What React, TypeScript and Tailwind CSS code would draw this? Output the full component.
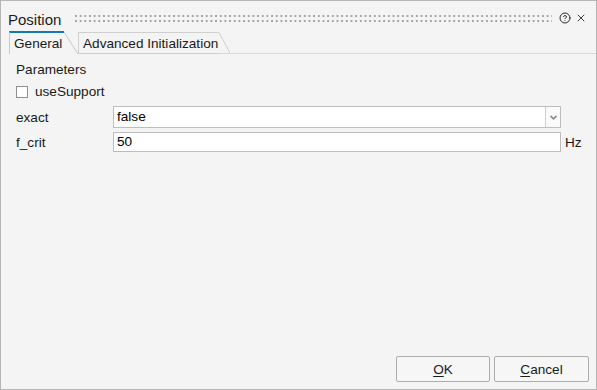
import { CircleHelp, X } from "lucide-react";

function Tab({ label, active, width, slant }: { label: string; active?: boolean; width: number; slant: number }) {
  const h = active ? 23 : 22;
  return (
    <div className="flex items-stretch" style={{ height: h }}>
      <div
        className={
          active
            ? "border-l border-t-2 border-l-[#c9c9c9] border-t-[#1479b8] pl-[4px] pt-[3px] pb-[3px] leading-[15px] whitespace-nowrap"
            : "border-l border-t border-b border-[#cfcfcf] pl-[4px] pt-[3px] pb-[2px] leading-[15px] whitespace-nowrap"
        }
        style={{ width }}
      >
        {label}
      </div>
      <svg width={slant} height={h} className="block">
        {active ? (
          <line x1="0" y1="1" x2={slant} y2={h} stroke="#c9c9c9" strokeWidth="1" />
        ) : (
          <>
            <line x1="0" y1="0.5" x2={slant} y2={h - 1} stroke="#cfcfcf" strokeWidth="1" />
            <line x1="0" y1={h - 0.5} x2={slant} y2={h - 0.5} stroke="#d8d8d8" strokeWidth="1" />
          </>
        )}
      </svg>
    </div>
  );
}

// drag grip dots in the title bar
function Grip() {
  return (
    <svg width="477" height="8" className="block" shapeRendering="crispEdges">
      <defs>
        <pattern id="grip" width="4.67" height="5" patternUnits="userSpaceOnUse">
          <rect x="0" y="0" width="2" height="2" fill="#a3a3a3" />
        </pattern>
      </defs>
      <rect x="0" y="0" width="477" height="8" fill="url(#grip)" />
    </svg>
  );
}

export default function App() {
  return (
    <div
      className="w-[597px] h-[390px] bg-[#f4f4f4] border border-[#b5b5b5] flex flex-col text-[13.6px] text-[#1a1a1a] overflow-hidden"
      style={{ fontFamily: '"Liberation Sans", Arial, sans-serif' }}
    >
      {/* title bar */}
      <div className="flex items-start h-[30px] pt-[11px] pl-[7px]">
        <span className="text-[15px] leading-[15px] text-[#1c1c1c]">Position</span>
        <div className="ml-[14px] mt-[3px]">
          <Grip />
        </div>
        <div className="ml-[7px] flex items-center gap-[4px] text-[#2a2a2a]">
          <CircleHelp size={12} strokeWidth={2} />
          <X size={12} strokeWidth={1.8} />
        </div>
      </div>

      {/* tabs */}
      <div className="flex items-end h-[23px]">
        <div className="w-[8px]" />
        <Tab label="General" active width={55} slant={14} />
        <Tab label="Advanced Initialization" width={141} slant={11} />
        <div className="flex-1 h-[1px] bg-[#dadada]" />
      </div>

      {/* content */}
      <div className="flex-1 pl-[15px] pt-[8px]">
        <div className="leading-[15px]">Parameters</div>
        <div className="mt-[7px] h-[15px] flex items-center">
          <div className="w-[12px] h-[12px] border border-[#8f8f8f] bg-white" />
          <span className="ml-[7px] leading-[15px]">useSupport</span>
        </div>

        <div className="mt-[7px] flex items-center h-[22px]">
          <span className="w-[97px] leading-[15px]">exact</span>
          <div className="w-[448px] h-[22px] border border-[#bdbdbd] bg-white flex items-stretch">
            <span className="flex-1 pl-[3px] leading-[20px] text-black">false</span>
            <div className="w-[15px] border-l border-[#cdcdcd] bg-[#fafafa] flex items-center justify-center">
              <svg width="7" height="5" viewBox="0 0 7 5">
                <path d="M0.5 0.8 L3.5 3.8 L6.5 0.8" fill="none" stroke="#8a8a8a" strokeWidth="1.6" />
              </svg>
            </div>
          </div>
        </div>

        <div className="mt-[4px] flex items-center h-[20px]">
          <span className="w-[97px] leading-[15px]">f_crit</span>
          <div className="w-[448px] h-[20px] border border-[#bdbdbd] bg-white pl-[3px] leading-[18px] text-black">50</div>
          <span className="ml-[4px] leading-[15px]">Hz</span>
        </div>
      </div>

      {/* footer */}
      <div className="flex justify-end gap-[4px] pr-[7px] pb-[7px]">
        <button className="w-[94px] h-[26px] border border-[#adadad] rounded-[2px] bg-[#f6f6f6] leading-[15px] text-[#1a1a1a]">
          <span className="underline underline-offset-2">O</span>K
        </button>
        <button className="w-[95px] h-[26px] border border-[#adadad] rounded-[2px] bg-[#f6f6f6] leading-[15px] text-[#1a1a1a]">
          <span className="underline underline-offset-2">C</span>ancel
        </button>
      </div>
    </div>
  );
}
